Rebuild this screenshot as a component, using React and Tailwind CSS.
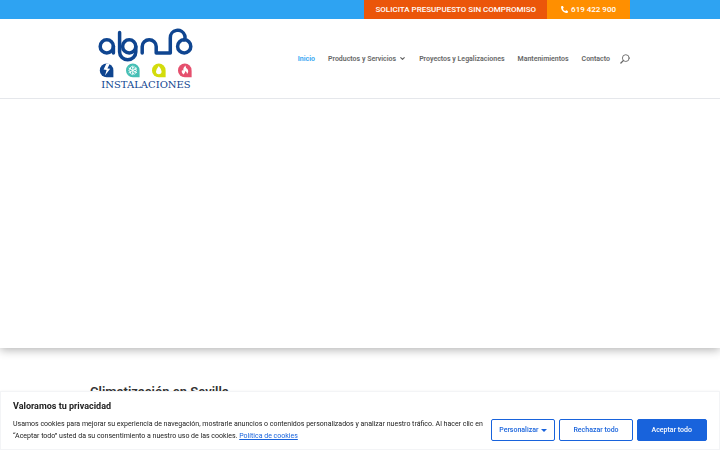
import React from 'react';
import { ChevronDown } from 'lucide-react';
import { FaPhoneAlt } from 'react-icons/fa';

const navLinks = [
    { label: 'Inicio', active: true },
    { label: 'Productos y Servicios', hasMenu: true },
    { label: 'Proyectos y Legalizaciones' },
    { label: 'Mantenimientos' },
    { label: 'Contacto' }
];

const Logo = () => (
    <svg viewBox="0 0 96 62" className="h-[62px] w-24" role="img" aria-label="Alonso Instalaciones">
        {/* wordmark */}
        <g fill="none" stroke="#0f4590" strokeWidth="3.5" strokeLinecap="round" strokeLinejoin="round">
            <circle cx="8.8" cy="18.4" r="6.6" />
            <path d="M15.4 18.4 V25" />
            <path d="M21.6 4.6 V24 A8.1 7.8 0 0 0 37.8 24 V18.4" />
            <circle cx="31.2" cy="18.4" r="6.6" />
            <path d="M44.2 25 V18.6 A7 6.8 0 0 1 58.2 18.6 V25 H72.3 V10 A7.4 7.4 0 0 1 86.8 7.6 Q87.6 10.6 86 11.8" />
            <circle cx="86.2" cy="18.4" r="6.6" />
        </g>

        {/* electricity */}
        <path d="M1.8 42.4 A6.8 6.8 0 0 1 15.4 42.4 V49.2 H8.6 A6.8 6.8 0 0 1 1.8 42.4Z" fill="#0f4590" />
        <path d="M8.4 35.4 L5.6 41.6 L8.6 42 L7 47.6 L12.2 40.8 L9.4 40.4 L11.8 35.8Z" fill="#fff" />

        {/* cooling */}
        <path d="M28 42.4 A6.8 6.8 0 0 1 41.6 42.4 V49.2 H34.8 A6.8 6.8 0 0 1 28 42.4Z" fill="#45bfb5" />
        <g stroke="#fff" strokeWidth="0.9" strokeLinecap="round" fill="none">
            <path d="M34.8 38 V46.8 M31 40.2 L38.6 44.6 M38.6 40.2 L31 44.6" />
            <path d="M33.4 38.6 L34.8 39.8 L36.2 38.6 M33.4 46.2 L34.8 45 L36.2 46.2 M31 42 L32.6 41.2 L32.4 39.4 M38.6 42 L37 41.2 L37.2 39.4 M31 42.8 L32.6 43.6 L32.4 45.4 M38.6 42.8 L37 43.6 L37.2 45.4" />
        </g>

        {/* water */}
        <path d="M54 42.4 A6.8 6.8 0 0 1 67.6 42.4 V49.2 H60.8 A6.8 6.8 0 0 1 54 42.4Z" fill="#d3dc0c" />
        <path d="M60.8 38 Q63.6 41.6 63.6 43.4 A2.8 2.8 0 0 1 58 43.4 Q58 41.6 60.8 38Z" fill="#fff" />

        {/* heating */}
        <path d="M80 42.4 A6.8 6.8 0 0 1 93.6 42.4 V49.2 H86.8 A6.8 6.8 0 0 1 80 42.4Z" fill="#e5506e" />
        <path d="M87.4 37.4 Q87.6 39.6 89.4 41 Q91.2 43.8 89 46 Q89 44 87.4 43 Q87.2 45 85.6 46.4 Q83 44.6 84 42 Q84.8 42.6 85.2 42.8 Q85 39.4 87.4 37.4Z" fill="#fff" />

        <text x="48" y="60" textAnchor="middle" fill="#0f4590" className="font-['DejaVu_Serif',serif] text-[10px]">INSTALACIONES</text>
    </svg>
);

const TopBar = () => (
    <div className="bg-[#2ea3f2]">
        <div className="mx-auto flex w-3/4 justify-end text-[8px] leading-[19px] font-medium text-white">
            <a href="#presupuesto" className="bg-[#eb560a] px-[11px]">SOLICITA PRESUPUESTO SIN COMPROMISO</a>
            <a href="tel:619422900" className="flex items-center gap-[3px] bg-[#ff8f00] px-[14px]">
                <FaPhoneAlt className="size-[7px]" />
                619 422 900
            </a>
        </div>
    </div>
);

const Header = () => (
    <header className="relative z-10 border-b border-gray-200 bg-white">
        <div className="mx-auto flex h-[79px] w-3/4 items-center justify-between pl-2">
            <Logo />
            <div className="flex items-center gap-[10px]">
                <nav className="flex items-center gap-[13px] text-[7px] leading-3 font-semibold text-[#666]">
                    {navLinks.map((link) => (
                        <a key={link.label} href="#" className={link.active ? 'text-[#2ea3f2]' : 'flex items-center gap-[3px]'}>
                            {link.label}
                            {link.hasMenu && <ChevronDown className="size-[7px]" strokeWidth={4} />}
                        </a>
                    ))}
                </nav>
                <button aria-label="Buscar" className="text-[#666]">
                    <svg viewBox="0 0 10 10" className="size-[10px]" fill="none" stroke="currentColor" strokeLinecap="round">
                        <circle cx="5.8" cy="4.1" r="3.4" strokeWidth="0.9" />
                        <path d="M3.3 6.6 L0.9 9" strokeWidth="1.3" />
                    </svg>
                </button>
            </div>
        </div>
    </header>
);

const CookieBanner = () => (
    <section className="fixed inset-x-0 bottom-0 border border-gray-100 bg-white px-3 pt-2 pb-[7px] shadow">
        <h2 className="text-[9px] leading-3 font-bold text-[#212121]">Valoramos tu privacidad</h2>
        <div className="mt-1.5 flex items-center gap-2">
            <p className="flex-1 text-[7px] leading-3 text-[#212121]">
                Usamos cookies para mejorar su experiencia de navegación, mostrarle anuncios o contenidos personalizados y analizar nuestro tráfico. Al hacer clic en “Aceptar todo” usted da su consentimiento a nuestro uso de las cookies.{' '}
                <a href="#cookies" className="inline-block text-[#1863dc] underline">Política de cookies</a>
            </p>
            <div className="flex gap-1 text-[7px] font-medium">
                <button className="flex h-[22px] items-center gap-[3px] rounded-xs border border-[#1863dc] px-[7px] text-[#1863dc]">
                    Personalizar
                    <span className="border-x-[3px] border-t-[3px] border-x-transparent border-t-[#1863dc]" />
                </button>
                <button className="h-[22px] rounded-xs border border-[#1863dc] px-[13px] text-[#1863dc]">Rechazar todo</button>
                <button className="h-[22px] rounded-xs border border-[#1863dc] bg-[#1863dc] px-[14px] text-white">Aceptar todo</button>
            </div>
        </div>
    </section>
);

const App = () => (
    <div className="h-screen overflow-hidden bg-white font-['Roboto',sans-serif]">
        <TopBar />
        <Header />
        <main>
            <section className="h-[249px] shadow-[0_2px_9px_rgba(0,0,0,0.3)]" />
            <h1 className="mx-auto w-3/4 pt-9 text-[13px] leading-4 font-semibold text-[#333]">Climatización en Sevilla</h1>
        </main>
        <CookieBanner />
    </div>
);

export default App;
